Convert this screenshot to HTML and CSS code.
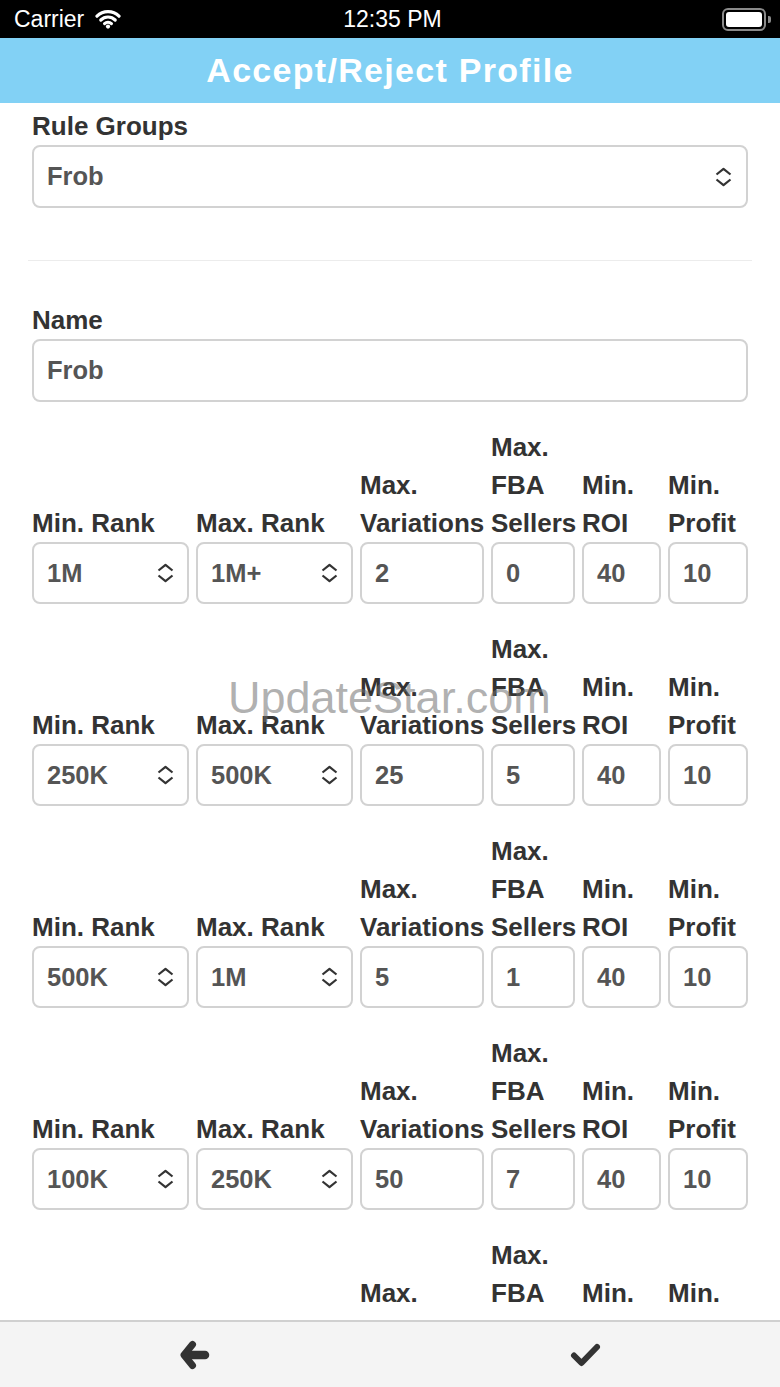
FILE: index.html
```html
<!DOCTYPE html>
<html lang="en">
<head>
<meta charset="UTF-8" />
<meta name="viewport" content="width=device-width, initial-scale=1" />
<title>Accept/Reject Profile</title>
<link rel="stylesheet" href="styles.css">
</head>
<body>

<div class="screen">

  <div class="status-bar">
    <div class="status-left">
      <span>Carrier</span>
      <svg class="wifi" width="26" height="20" viewBox="0 0 26 20">
        <path d="M2 7.2 A15.5 15.5 0 0 1 24 7.2" />
        <path d="M5.8 11 A10.2 10.2 0 0 1 20.2 11" />
        <path d="M9.6 14.6 A4.9 4.9 0 0 1 16.4 14.6" />
        <circle cx="13" cy="17.6" r="2.1" />
      </svg>
    </div>
    <div class="status-time">12:35 PM</div>
    <div class="status-right">
      <div class="battery"><div class="battery-fill"></div></div>
      <div class="battery-nub"></div>
    </div>
  </div>

  <header class="title-bar">
    <h1>Accept/Reject Profile</h1>
  </header>

  <main class="content">

    <div class="field">
      <label>Rule Groups</label>
      <div class="box box-wide">
        <span>Frob</span>
        <svg class="updown" width="19" height="20" viewBox="0 0 19 20"><path d="M2.5 7.5 L9.5 1.8 L16.5 7.5 M2.5 12.5 L9.5 18.2 L16.5 12.5" /></svg>
      </div>
    </div>

    <hr class="divider">

    <div class="field">
      <label>Name</label>
      <div class="box box-wide"><span>Frob</span></div>
    </div>

    <div class="rule-row">
      <div class="cell"><label>Min. Rank</label><div class="box"><span>1M</span><svg class="updown" width="19" height="20" viewBox="0 0 19 20"><path d="M2.5 7.5 L9.5 1.8 L16.5 7.5 M2.5 12.5 L9.5 18.2 L16.5 12.5" /></svg></div></div>
      <div class="cell"><label>Max. Rank</label><div class="box"><span>1M+</span><svg class="updown" width="19" height="20" viewBox="0 0 19 20"><path d="M2.5 7.5 L9.5 1.8 L16.5 7.5 M2.5 12.5 L9.5 18.2 L16.5 12.5" /></svg></div></div>
      <div class="cell"><label>Max. Variations</label><div class="box"><span>2</span></div></div>
      <div class="cell"><label>Max. FBA Sellers</label><div class="box"><span>0</span></div></div>
      <div class="cell"><label>Min. ROI</label><div class="box"><span>40</span></div></div>
      <div class="cell"><label>Min. Profit</label><div class="box"><span>10</span></div></div>
    </div>

    <div class="rule-row">
      <div class="cell"><label>Min. Rank</label><div class="box"><span>250K</span><svg class="updown" width="19" height="20" viewBox="0 0 19 20"><path d="M2.5 7.5 L9.5 1.8 L16.5 7.5 M2.5 12.5 L9.5 18.2 L16.5 12.5" /></svg></div></div>
      <div class="cell"><label>Max. Rank</label><div class="box"><span>500K</span><svg class="updown" width="19" height="20" viewBox="0 0 19 20"><path d="M2.5 7.5 L9.5 1.8 L16.5 7.5 M2.5 12.5 L9.5 18.2 L16.5 12.5" /></svg></div></div>
      <div class="cell"><label>Max. Variations</label><div class="box"><span>25</span></div></div>
      <div class="cell"><label>Max. FBA Sellers</label><div class="box"><span>5</span></div></div>
      <div class="cell"><label>Min. ROI</label><div class="box"><span>40</span></div></div>
      <div class="cell"><label>Min. Profit</label><div class="box"><span>10</span></div></div>
    </div>

    <div class="rule-row">
      <div class="cell"><label>Min. Rank</label><div class="box"><span>500K</span><svg class="updown" width="19" height="20" viewBox="0 0 19 20"><path d="M2.5 7.5 L9.5 1.8 L16.5 7.5 M2.5 12.5 L9.5 18.2 L16.5 12.5" /></svg></div></div>
      <div class="cell"><label>Max. Rank</label><div class="box"><span>1M</span><svg class="updown" width="19" height="20" viewBox="0 0 19 20"><path d="M2.5 7.5 L9.5 1.8 L16.5 7.5 M2.5 12.5 L9.5 18.2 L16.5 12.5" /></svg></div></div>
      <div class="cell"><label>Max. Variations</label><div class="box"><span>5</span></div></div>
      <div class="cell"><label>Max. FBA Sellers</label><div class="box"><span>1</span></div></div>
      <div class="cell"><label>Min. ROI</label><div class="box"><span>40</span></div></div>
      <div class="cell"><label>Min. Profit</label><div class="box"><span>10</span></div></div>
    </div>

    <div class="rule-row">
      <div class="cell"><label>Min. Rank</label><div class="box"><span>100K</span><svg class="updown" width="19" height="20" viewBox="0 0 19 20"><path d="M2.5 7.5 L9.5 1.8 L16.5 7.5 M2.5 12.5 L9.5 18.2 L16.5 12.5" /></svg></div></div>
      <div class="cell"><label>Max. Rank</label><div class="box"><span>250K</span><svg class="updown" width="19" height="20" viewBox="0 0 19 20"><path d="M2.5 7.5 L9.5 1.8 L16.5 7.5 M2.5 12.5 L9.5 18.2 L16.5 12.5" /></svg></div></div>
      <div class="cell"><label>Max. Variations</label><div class="box"><span>50</span></div></div>
      <div class="cell"><label>Max. FBA Sellers</label><div class="box"><span>7</span></div></div>
      <div class="cell"><label>Min. ROI</label><div class="box"><span>40</span></div></div>
      <div class="cell"><label>Min. Profit</label><div class="box"><span>10</span></div></div>
    </div>

    <div class="rule-row">
      <div class="cell"><label>Min. Rank</label><div class="box"><span>1</span><svg class="updown" width="19" height="20" viewBox="0 0 19 20"><path d="M2.5 7.5 L9.5 1.8 L16.5 7.5 M2.5 12.5 L9.5 18.2 L16.5 12.5" /></svg></div></div>
      <div class="cell"><label>Max. Rank</label><div class="box"><span>100K</span><svg class="updown" width="19" height="20" viewBox="0 0 19 20"><path d="M2.5 7.5 L9.5 1.8 L16.5 7.5 M2.5 12.5 L9.5 18.2 L16.5 12.5" /></svg></div></div>
      <div class="cell"><label>Max. Variations</label><div class="box"><span>100</span></div></div>
      <div class="cell"><label>Max. FBA Sellers</label><div class="box"><span>10</span></div></div>
      <div class="cell"><label>Min. ROI</label><div class="box"><span>40</span></div></div>
      <div class="cell"><label>Min. Profit</label><div class="box"><span>10</span></div></div>
    </div>

  </main>

  <footer class="toolbar">
    <div class="tool-button">
      <svg class="back" width="30" height="30" viewBox="0 0 30 30">
        <path class="shaft" d="M7 15 L25 15" />
        <path d="M12.5 4.5 L4 15 L12.5 25.5" />
      </svg>
    </div>
    <div class="tool-button">
      <svg class="check" width="31" height="24" viewBox="0 0 31 24">
        <path d="M4 12.5 L11.5 20 L27 4" />
      </svg>
    </div>
  </footer>

  <div class="watermark">UpdateStar.com</div>

</div>

</body>
</html>
```

FILE: styles.css
```css
body {
  margin: 0;
  font-family: "Liberation Sans", Arial, sans-serif;
  background: #fff;
}
.screen {
  position: relative;
  height: 100vh;
  display: flex;
  flex-direction: column;
  overflow: hidden;
}
.status-bar {
  height: 38px;
  flex: none;
  background: #000;
  color: #fff;
  font-size: 23px;
  display: grid;
  grid-template-columns: 1fr auto 1fr;
  align-items: center;
  padding: 0 9px 0 14px;
}
.status-left {
  display: flex;
  align-items: center;
  gap: 11px;
}
.wifi path {
  fill: none;
  stroke: #fff;
  stroke-width: 3.2;
  stroke-linecap: round;
}
.wifi circle {
  fill: #fff;
}
.status-right {
  display: flex;
  align-items: center;
  justify-content: flex-end;
  gap: 2px;
}
.battery {
  width: 36px;
  height: 15px;
  border: 2px solid #8a8a8a;
  border-radius: 6px;
  padding: 2px;
}
.battery-fill {
  height: 100%;
  background: #fff;
  border-radius: 3px;
}
.battery-nub {
  width: 3px;
  height: 7px;
  background: #8a8a8a;
  border-radius: 0 2px 2px 0;
}
.title-bar {
  height: 65px;
  flex: none;
  background: #82d1f5;
  display: flex;
  align-items: center;
  justify-content: center;
}
.title-bar h1 {
  margin: 0;
  color: #fff;
  font-size: 34px;
  font-weight: bold;
  letter-spacing: 1.3px;
}
.content {
  flex: 1;
  overflow: hidden;
  padding: 4px 32px 0;
}
label {
  display: block;
  color: #333;
  font-size: 26px;
  font-weight: bold;
  line-height: 38px;
  white-space: normal;
}
.box {
  height: 62px;
  box-sizing: border-box;
  border: 2px solid #d2d2d2;
  border-radius: 8px;
  display: flex;
  align-items: center;
  justify-content: space-between;
  padding: 0 12px 0 13px;
  color: #555;
  font-size: 25.5px;
  font-weight: bold;
}
.box-wide {
  height: 63px;
  padding-right: 13px;
}
.updown path {
  fill: none;
  stroke: #333;
  stroke-width: 2.2;
  stroke-linejoin: round;
}
.divider {
  border: none;
  border-top: 1px solid #ececec;
  margin: 52px -4px 40px;
}
.rule-row {
  display: grid;
  grid-template-columns: 157px 157px 124px 84px 79px 80px;
  gap: 7px;
  margin-top: 26px;
}
.cell {
  display: flex;
  flex-direction: column;
  justify-content: flex-end;
}
.toolbar {
  height: 65px;
  flex: none;
  background: #f4f4f4;
  border-top: 2px solid #d0d0d0;
  display: flex;
}
.tool-button {
  flex: 1;
  display: flex;
  align-items: center;
  justify-content: center;
}
.back path, .check path {
  fill: none;
  stroke: #333;
  stroke-linecap: round;
  stroke-linejoin: round;
}
.back path {
  stroke-width: 7;
}
.back .shaft {
  stroke-width: 8.5;
}
.check path {
  stroke-width: 6;
}
.watermark {
  position: absolute;
  left: 228px;
  top: 675px;
  font-size: 45px;
  line-height: 1;
  color: rgba(110, 110, 110, 0.55);
  pointer-events: none;
}
```
